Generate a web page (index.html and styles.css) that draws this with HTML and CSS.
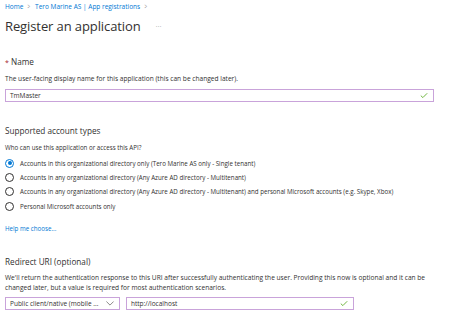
FILE: index.html
```html
<!DOCTYPE html>
<html lang="en">
<head>
    <meta charset="UTF-8">
    <title>Register an application</title>
    <link rel="stylesheet" href="styles.css">
</head>
<body>
    <nav class="crumbs">
        <a href="#">Home</a><span class="sep">&gt;</span><a href="#">Tero Marine AS | App registrations</a><span class="sep">&gt;</span>
    </nav>
    <div class="title-row">
        <h1>Register an application</h1>
        <span class="more">&middot;&middot;&middot;</span>
    </div>

    <section class="name-section">
        <h2><span class="req">*</span> Name</h2>
        <p class="desc">The user-facing display name for this application (this can be changed later).</p>
        <div class="field wide">
            <span class="value">TmMaster</span>
            <svg class="ok" viewBox="0 0 10 8" width="8" height="7"><path d="M1 4.2 L3.6 6.6 L9 1.2" fill="none" stroke="#6bb33a" stroke-width="1.2"/></svg>
        </div>
    </section>

    <section class="types">
        <h2>Supported account types</h2>
        <p class="desc small">Who can use this application or access this API?</p>
        <ul class="radios">
            <li><span class="radio checked"></span>Accounts in this organizational directory only (Tero Marine AS only - Single tenant)</li>
            <li><span class="radio"></span>Accounts in any organizational directory (Any Azure AD directory - Multitenant)</li>
            <li><span class="radio"></span>Accounts in any organizational directory (Any Azure AD directory - Multitenant) and personal Microsoft accounts (e.g. Skype, Xbox)</li>
            <li><span class="radio"></span>Personal Microsoft accounts only</li>
        </ul>
        <a class="help" href="#">Help me choose...</a>
    </section>

    <section class="redirect">
        <h2>Redirect URI (optional)</h2>
        <p class="desc">We'll return the authentication response to this URI after successfully authenticating the user. Providing this now is optional and it can be changed later, but a value is required for most authentication scenarios.</p>
        <div class="uri-row">
            <div class="field select">
                <span class="value">Public client/native (mobile ...</span>
                <svg class="chev" viewBox="0 0 10 6" width="8" height="5"><path d="M0.5 0.5 L5 5 L9.5 0.5" fill="none" stroke="#605e5c" stroke-width="0.9"/></svg>
            </div>
            <div class="field uri">
                <span class="value">http://localhost</span>
                <svg class="ok" viewBox="0 0 10 8" width="8" height="7"><path d="M1 4.2 L3.6 6.6 L9 1.2" fill="none" stroke="#6bb33a" stroke-width="1.2"/></svg>
            </div>
        </div>
    </section>
</body>
</html>
```

FILE: styles.css
```css
body {
    margin: 0;
    padding: 0 5px;
    background-color: #fff;
    font-family: "Open Sans", "Noto Sans", sans-serif;
    color: #323130;
}

a {
    color: #0078d4;
    text-decoration: none;
}

.crumbs {
    font-size: 6.5px;
    line-height: 9px;
    padding-top: 2px;
    display: flex;
    align-items: center;
}

.crumbs .sep {
    color: #8a8886;
    margin: 0 4px;
    transform: scaleX(0.7);
}

.title-row {
    display: flex;
    align-items: center;
    margin-top: 6px;
}

h1 {
    font-size: 13px;
    font-weight: 400;
    margin: 0;
    line-height: 18px;
    letter-spacing: -0.1px;
}

.more {
    font-size: 6px;
    color: #605e5c;
    margin-left: 15px;
    letter-spacing: 0.5px;
}

h2 {
    font-size: 8.2px;
    font-weight: 400;
    margin: 0;
    line-height: 12px;
}

.req {
    color: #a4262c;
    font-size: 7px;
}

.desc {
    font-size: 6.6px;
    line-height: 10px;
    margin: 0;
}

.desc.small {
    font-size: 6.2px;
}

.name-section {
    margin-top: 21px;
}

.name-section .desc {
    margin-top: 5px;
}

.field {
    height: 13px;
    box-sizing: border-box;
    border: 1.5px solid #c9a3da;
    display: flex;
    align-items: center;
    justify-content: space-between;
    padding: 0 5px 0 4px;
    font-size: 6.5px;
}

.field.wide {
    width: 429px;
    margin-top: 5px;
}

.types {
    margin-top: 23px;
}

.types .desc {
    margin-top: 6px;
}

.radios {
    list-style: none;
    margin: 3px 0 0;
    padding: 0;
}

.radios li {
    display: flex;
    align-items: center;
    height: 14.3px;
    font-size: 6.2px;
}

.radio {
    width: 9px;
    height: 9px;
    box-sizing: border-box;
    border: 1px solid #323130;
    border-radius: 50%;
    margin-right: 6px;
    flex: none;
    display: flex;
    align-items: center;
    justify-content: center;
}

.radio.checked {
    border-color: #0078d4;
}

.radio.checked::after {
    content: "";
    width: 4px;
    height: 4px;
    border-radius: 50%;
    background-color: #0078d4;
}

.help {
    display: block;
    font-size: 6.2px;
    margin-top: 11px;
}

.redirect {
    margin-top: 23px;
}

.redirect .desc {
    margin-top: 5px;
    width: 430px;
}

.uri-row {
    display: flex;
    gap: 6px;
    margin-top: 4px;
}

.field.select {
    width: 115px;
}

.field.uri {
    width: 228px;
}
```
